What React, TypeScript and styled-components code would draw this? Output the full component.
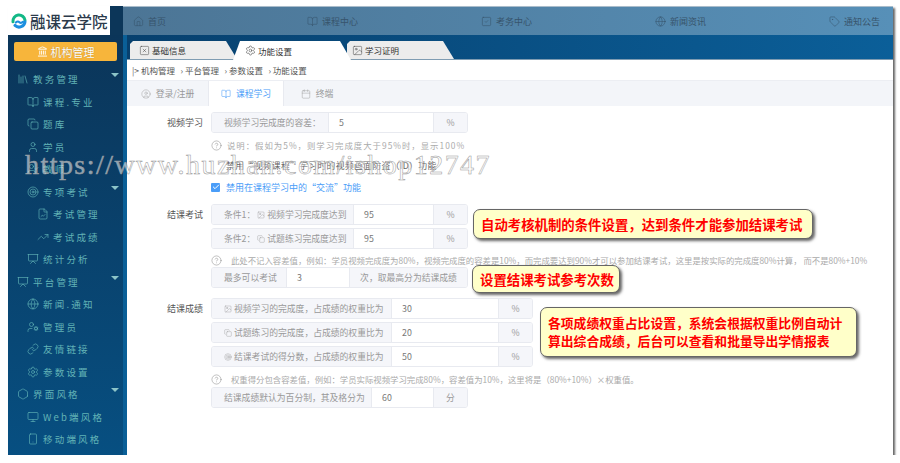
import React from "react";
import styled, { createGlobalStyle } from "styled-components";
import {
  BookOpen,
  Calendar,
  CircleHelp,
  CircleUser,
  Check,
  Copy,
  FileChartLine,
  Globe,
  Hexagon,
  House,
  Image,
  Landmark,
  Library,
  Link,
  Monitor,
  Presentation,
  Settings,
  Smartphone,
  SquareCheck,
  SquareX,
  Tag,
  Target,
  TrendingUp,
  User,
  UserCheck,
  UserCog,
} from "lucide-react";

const GlobalStyle = createGlobalStyle`
  html, body {
    margin: 0;
    padding: 0;
    background: #fff;
  }
  body {
    font-family: "Noto Sans CJK SC", "Liberation Sans", sans-serif;
  }
`;

const navItems = [
  { icon: House, label: "首页" },
  { icon: BookOpen, label: "课程中心" },
  { icon: SquareCheck, label: "考务中心" },
  { icon: Globe, label: "新闻资讯" },
  { icon: Tag, label: "通知公告" },
];

const menu = [
  { icon: Library, label: "教务管理", level: 0, caret: true },
  { icon: BookOpen, label: "课程.专业", level: 1 },
  { icon: Copy, label: "题库", level: 1 },
  { icon: User, label: "学员", level: 1 },
  { icon: UserCheck, label: "教师", level: 1 },
  { icon: Target, label: "专项考试", level: 1, caret: true },
  { icon: FileChartLine, label: "考试管理", level: 2 },
  { icon: TrendingUp, label: "考试成绩", level: 2 },
  { icon: Presentation, label: "统计分析", level: 1 },
  { icon: Presentation, label: "平台管理", level: 0, caret: true },
  { icon: Globe, label: "新闻.通知", level: 1 },
  { icon: UserCog, label: "管理员", level: 1 },
  { icon: Link, label: "友情链接", level: 1 },
  { icon: Settings, label: "参数设置", level: 1 },
  { icon: Hexagon, label: "界面风格", level: 0, caret: true },
  { icon: Monitor, label: "Web端风格", level: 1 },
  { icon: Smartphone, label: "移动端风格", level: 1 },
];

const App = () => {
  return (
    <>
      <GlobalStyle />
      <Frame>
        <Header>
          <LogoCell>
            <LogoBox>
              <svg width="16" height="16" viewBox="0 0 20 20" fill="none">
                <path d="M2.5 11 A7.5 7.5 0 0 1 17.5 9" stroke="#12b886" strokeWidth="3.8" strokeLinecap="round" />
                <path d="M17.5 11 A7.5 7.5 0 0 1 5 15.6" stroke="#1c8fe0" strokeWidth="3.8" strokeLinecap="round" />
                <path d="M6 12 Q8.5 9.5 10.5 11.5 Q12.5 13.5 15 11" stroke="#1c8fe0" strokeWidth="2.6" strokeLinecap="round" />
              </svg>
              <LogoText>融课云学院</LogoText>
            </LogoBox>
          </LogoCell>
          <TopNav>
            {navItems.map((item) => (
              <TopNavItem key={item.label}>
                <item.icon size={11} strokeWidth={1.2} />
                {item.label}
              </TopNavItem>
            ))}
          </TopNav>
        </Header>
        <Body>
          <Sidebar>
            <OrangeButton>
              <Landmark size={11} strokeWidth={2} />
              机构管理
            </OrangeButton>
            <Menu>
              {menu.map((item) => (
                <MenuItem key={item.label} $level={item.level}>
                  <item.icon size={12} strokeWidth={1.3} />
                  <span>{item.label}</span>
                  {item.caret && <Caret />}
                </MenuItem>
              ))}
            </Menu>
          </Sidebar>
          <Main>
            <TabBand>
              <PageTab $shift={0} $pad={9}>
                <SquareX size={11} strokeWidth={1} />
                基础信息
              </PageTab>
              <PageTab $active $shift={-4} $pad={12}>
                <Settings size={11} strokeWidth={1.1} />
                功能设置
              </PageTab>
              <PageTab $shift={-4} $pad={5}>
                <Image size={11} strokeWidth={1} />
                学习证明
              </PageTab>
            </TabBand>
            <Breadcrumb>
              <span>|&gt; 机构管理</span>
              <span>› 平台管理</span>
              <span>› 参数设置</span>
              <span>› 功能设置</span>
            </Breadcrumb>
            <SubTabs>
              <SubTab $width={81}>
                <CircleUser size={10} strokeWidth={1.1} />
                登录/注册
              </SubTab>
              <SubTab $active $width={76}>
                <BookOpen size={10} strokeWidth={1.3} />
                课程学习
              </SubTab>
              <SubTab $width={66}>
                <Calendar size={10} strokeWidth={1.1} />
                终端
              </SubTab>
            </SubTabs>
            <Form>
              <FieldRow $top={6}>
                <FieldLabel>视频学习</FieldLabel>
                <Group>
                  <Addon $width={118}>视频学习完成度的容差：</Addon>
                  <InputCell $width={104}>5</InputCell>
                  <Suffix $width={35}>%</Suffix>
                </Group>
              </FieldRow>
              <HelpLine $top={5} $gap={5} $spacing={1}>
                <CircleHelp size={11} strokeWidth={1.1} />
                说明：假如为5%，则学习完成度大于95%时，显示100%
              </HelpLine>
              <OptionNote>禁用“视频课程”学习时的视频画面防盗（ID）功能</OptionNote>
              <CheckLine>
                <CheckBox>
                  <Check size={8} strokeWidth={3} color="#fff" />
                </CheckBox>
                禁用在课程学习中的“交流”功能
              </CheckLine>

              <FieldRow $top={10}>
                <FieldLabel>结课考试</FieldLabel>
                <Group>
                  <Addon $width={143}>
                    条件1：
                    <Image size={8} strokeWidth={1.2} />
                    视频学习完成度达到
                  </Addon>
                  <InputCell $width={79}>95</InputCell>
                  <Suffix $width={35}>%</Suffix>
                </Group>
              </FieldRow>
              <FieldRow $top={3}>
                <Group>
                  <Addon $width={143}>
                    条件2：
                    <Copy size={8} strokeWidth={1.2} />
                    试题练习完成度达到
                  </Addon>
                  <InputCell $width={79}>95</InputCell>
                  <Suffix $width={35}>%</Suffix>
                </Group>
              </FieldRow>
              <HelpLine $top={4} $gap={9}>
                <CircleHelp size={11} strokeWidth={1.1} />
                此处不记入容差值，例如：学员视频完成度为80%，视频完成度的容差是10%，而完成要达到90%才可以参加结课考试，这里是按实际的完成度80%计算， 而不是80%+10%
              </HelpLine>
              <FieldRow $top={0}>
                <Group>
                  <Addon $width={76}>最多可以考试</Addon>
                  <InputCell $width={62}>3</InputCell>
                  <Suffix $width={119}>次，取最高分为结课成绩</Suffix>
                </Group>
              </FieldRow>

              <FieldRow $top={10}>
                <FieldLabel>结课成绩</FieldLabel>
                <Group>
                  <Addon $width={181}>
                    <Image size={8} strokeWidth={1.2} />
                    视频学习的完成度，占成绩的权重比为
                  </Addon>
                  <InputCell $width={106}>30</InputCell>
                  <Suffix $width={35}>%</Suffix>
                </Group>
              </FieldRow>
              <FieldRow $top={3}>
                <Group>
                  <Addon $width={181}>
                    <Copy size={8} strokeWidth={1.2} />
                    试题练习的完成度，占成绩的权重比为
                  </Addon>
                  <InputCell $width={106}>20</InputCell>
                  <Suffix $width={35}>%</Suffix>
                </Group>
              </FieldRow>
              <FieldRow $top={3}>
                <Group>
                  <Addon $width={181}>
                    <Target size={8} strokeWidth={1.2} />
                    结课考试的得分数，占成绩的权重比为
                  </Addon>
                  <InputCell $width={106}>50</InputCell>
                  <Suffix $width={35}>%</Suffix>
                </Group>
              </FieldRow>
              <HelpLine $top={5} $gap={9}>
                <CircleHelp size={11} strokeWidth={1.1} />
                权重得分包含容差值，例如：学员实际视频学习完成80%，容差值为10%，这里将是（80%+10%）×权重值。
              </HelpLine>
              <FieldRow $top={1}>
                <Group>
                  <Addon $width={161}>结课成绩默认为百分制，其及格分为</Addon>
                  <InputCell $width={61}>60</InputCell>
                  <Suffix $width={35}>分</Suffix>
                </Group>
              </FieldRow>
            </Form>
          </Main>
        </Body>
        <Callout $left={465} $top={203} $width={340} $height={30}>
          自动考核机制的条件设置，达到条件才能参加结课考试
        </Callout>
        <Callout $left={464} $top={259} $width={148} $height={28}>
          设置结课考试参考次数
        </Callout>
        <Callout $left={532} $top={301} $width={317} $height={50} $small>
          各项成绩权重占比设置，系统会根据权重比例自动计
          <br />
          算出综合成绩，后台可以查看和批量导出学情报表
        </Callout>
        <Watermark>https://www.huzhan.com/ishop12747</Watermark>
      </Frame>
    </>
  );
};

const Frame = styled.div`
  position: relative;
  margin: 6px 0 0 8px;
  width: 885px;
  height: 449px;
  background: #fff;
  box-shadow: 2px 2px 2px #666;
`;

const Header = styled.header`
  display: flex;
  height: 29px;
`;

const LogoCell = styled.div`
  flex: none;
  width: 115px;
  background: #0c3659;
`;

const LogoBox = styled.div`
  display: flex;
  align-items: center;
  gap: 3px;
  width: 102px;
  height: 29px;
  padding-left: 3px;
  box-sizing: border-box;
  background: #fff;
`;

const LogoText = styled.span`
  font-size: 15.5px;
  font-weight: 500;
  color: #2c3a4b;
  white-space: nowrap;
`;

const TopNav = styled.nav`
  flex: 1;
  min-width: 0;
  display: grid;
  grid-template-columns: repeat(4, 174px) 1fr;
  padding-left: 10px;
  border-top: 1px solid #a9bccb;
  box-sizing: border-box;
  background: linear-gradient(90deg, #4c7595, #5790b8);
`;

const TopNavItem = styled.div`
  display: flex;
  align-items: center;
  gap: 4px;
  font-size: 9px;
  color: #37546c;

  svg {
    flex: none;
  }
`;

const Body = styled.div`
  display: flex;
  height: 420px;
`;

const Sidebar = styled.aside`
  flex: none;
  width: 119px;
  box-sizing: border-box;
  padding-top: 7px;
  background: linear-gradient(180deg, #0b3559 0%, #074f81 100%);
  border-right: 4px solid #0a5f97;
`;

const OrangeButton = styled.div`
  display: flex;
  align-items: center;
  justify-content: center;
  gap: 3px;
  width: 103px;
  height: 19px;
  margin-left: 6px;
  border-radius: 2px;
  background: #f7b53b;
  color: #fff;
  font-size: 11px;
  text-shadow: 0 0 1px #a87a20;
`;

const Menu = styled.ul`
  list-style: none;
  margin: 7px 0 0;
  padding: 0;
`;

const MenuItem = styled.li<{ $level: number }>`
  position: relative;
  display: flex;
  align-items: center;
  gap: 4px;
  height: 22.5px;
  padding-left: ${(props) => 9 + props.$level * 10}px;
  color: #62b3b6;
  font-size: 9.5px;
  letter-spacing: 2.2px;
  white-space: nowrap;

  svg {
    flex: none;
  }
`;

const Caret = styled.i`
  position: absolute;
  right: 4px;
  top: 5px;
  width: 0;
  height: 0;
  border-left: 4px solid transparent;
  border-right: 4px solid transparent;
  border-top: 4px solid #8cc4c8;
`;

const Main = styled.main`
  flex: 1;
  min-width: 0;
  background: #fff;
`;

const TabBand = styled.div`
  display: flex;
  align-items: flex-end;
  height: 25px;
  padding-left: 3px;
  box-sizing: border-box;
  background: linear-gradient(90deg, #07406e, #0b5f99);
  border-bottom: 1px solid #7f9cb2;
`;

const PageTab = styled.div<{ $active?: boolean; $shift: number; $pad: number }>`
  position: relative;
  z-index: ${(props) => (props.$active ? 1 : 0)};
  display: flex;
  align-items: center;
  gap: 2px;
  width: ${(props) => (props.$active ? 118 : 107)}px;
  height: ${(props) => (props.$active ? 19 : 18)}px;
  margin-left: ${(props) => props.$shift}px;
  margin-bottom: ${(props) => (props.$active ? -1 : 0)}px;
  padding-left: ${(props) => props.$pad}px;
  box-sizing: border-box;
  background: ${(props) => (props.$active ? "#fff" : "#ececec")};
  color: #333;
  font-size: 8.5px;
  clip-path: polygon(0 100%, 0 3px, 3px 0, calc(100% - 11px) 0, 100% 100%);

  ${(props) =>
    props.$active &&
    "clip-path: polygon(0 100%, 7px 0, calc(100% - 11px) 0, 100% 100%);"}
`;

const Breadcrumb = styled.div`
  display: flex;
  align-items: center;
  gap: 5.5px;
  height: 20px;
  padding-left: 5px;
  color: #555;
  font-size: 8.5px;
`;

const SubTabs = styled.div`
  display: flex;
  height: 26px;
  background: #f3f5f9;
  border-top: 1px solid #eceef3;
  box-sizing: border-box;
`;

const SubTab = styled.div<{ $active?: boolean; $width: number }>`
  display: flex;
  align-items: center;
  justify-content: center;
  gap: 5px;
  width: ${(props) => props.$width}px;
  font-size: 8.8px;
  color: ${(props) => (props.$active ? "#4a9df8" : "#999")};
  background: ${(props) => (props.$active ? "#fff" : "transparent")};
  border-left: ${(props) => (props.$active ? "1px solid #e8eaf0" : "none")};
  border-right: ${(props) => (props.$active ? "1px solid #e8eaf0" : "none")};
  box-sizing: border-box;
`;

const Form = styled.form`
  display: flex;
  flex-direction: column;
  padding-left: 84px;
`;

const FieldRow = styled.div<{ $top: number }>`
  position: relative;
  display: flex;
  margin-top: ${(props) => props.$top}px;
`;

const FieldLabel = styled.label`
  position: absolute;
  right: 100%;
  top: 0;
  height: 21px;
  margin-right: 8px;
  line-height: 21px;
  font-size: 9px;
  color: #555;
  white-space: nowrap;
`;

const Group = styled.div`
  display: flex;
  height: 21px;
  border: 1px solid #e8eaf0;
  border-radius: 3px;
  box-sizing: border-box;
  overflow: hidden;
  font-size: 8.8px;
`;

const Addon = styled.div<{ $width: number }>`
  display: flex;
  align-items: center;
  gap: 2px;
  width: ${(props) => props.$width - 1}px;
  padding-left: 12px;
  box-sizing: border-box;
  background: #f5f6fa;
  border-right: 1px solid #e8eaf0;
  color: #999;
  white-space: nowrap;
`;

const InputCell = styled.div<{ $width: number }>`
  display: flex;
  align-items: center;
  width: ${(props) => props.$width}px;
  padding-left: 10px;
  box-sizing: border-box;
  background: #fff;
  color: #777;
`;

const Suffix = styled.div<{ $width: number }>`
  display: flex;
  align-items: center;
  justify-content: center;
  width: ${(props) => props.$width - 1}px;
  box-sizing: border-box;
  background: #f5f6fa;
  border-left: 1px solid #e8eaf0;
  color: #999;
  white-space: nowrap;
`;

const HelpLine = styled.p<{ $top: number; $gap: number; $spacing?: number }>`
  display: flex;
  align-items: center;
  gap: ${(props) => props.$gap}px;
  height: 14px;
  margin: ${(props) => props.$top}px 0 0;
  color: #aaa;
  font-size: 8.4px;
  letter-spacing: ${(props) => props.$spacing ?? 0}px;
  white-space: nowrap;

  svg {
    flex: none;
    color: #888;
  }
`;

const OptionNote = styled.p`
  height: 14px;
  margin: 7px 0 0;
  padding-left: 15px;
  line-height: 14px;
  color: #666;
  font-size: 8.8px;
  letter-spacing: 0.35px;
  white-space: nowrap;
`;

const CheckLine = styled.div`
  display: flex;
  align-items: center;
  gap: 6px;
  height: 14px;
  margin-top: 7px;
  color: #4a9df8;
  font-size: 9px;
`;

const CheckBox = styled.span`
  display: flex;
  align-items: center;
  justify-content: center;
  width: 9px;
  height: 9px;
  border-radius: 1px;
  background: #4a9df8;
`;

const Callout = styled.div<{
  $left: number;
  $top: number;
  $width: number;
  $height: number;
  $small?: boolean;
}>`
  position: absolute;
  left: ${(props) => props.$left}px;
  top: ${(props) => props.$top}px;
  width: ${(props) => props.$width}px;
  height: ${(props) => props.$height}px;
  padding-left: 7px;
  padding-top: ${(props) => (props.$small ? 6 : (props.$height - 18) / 2 - 1)}px;
  box-sizing: border-box;
  border: 1px solid #666;
  border-radius: 7px;
  background: #ffffc9;
  box-shadow: 2px 2px 3px #666;
  color: #f00;
  font-size: ${(props) => (props.$small ? 12.8 : 13.4)}px;
  line-height: 18px;
  font-weight: 700;
  white-space: nowrap;
`;

const Watermark = styled.div`
  position: absolute;
  left: 17px;
  top: 143px;
  font-family: "Liberation Serif", serif;
  font-size: 28px;
  line-height: 32px;
  letter-spacing: 1.45px;
  color: rgba(255, 255, 255, 0.55);
  -webkit-text-stroke: 0.5px #999;
  white-space: nowrap;
  pointer-events: none;
`;

export default App;
